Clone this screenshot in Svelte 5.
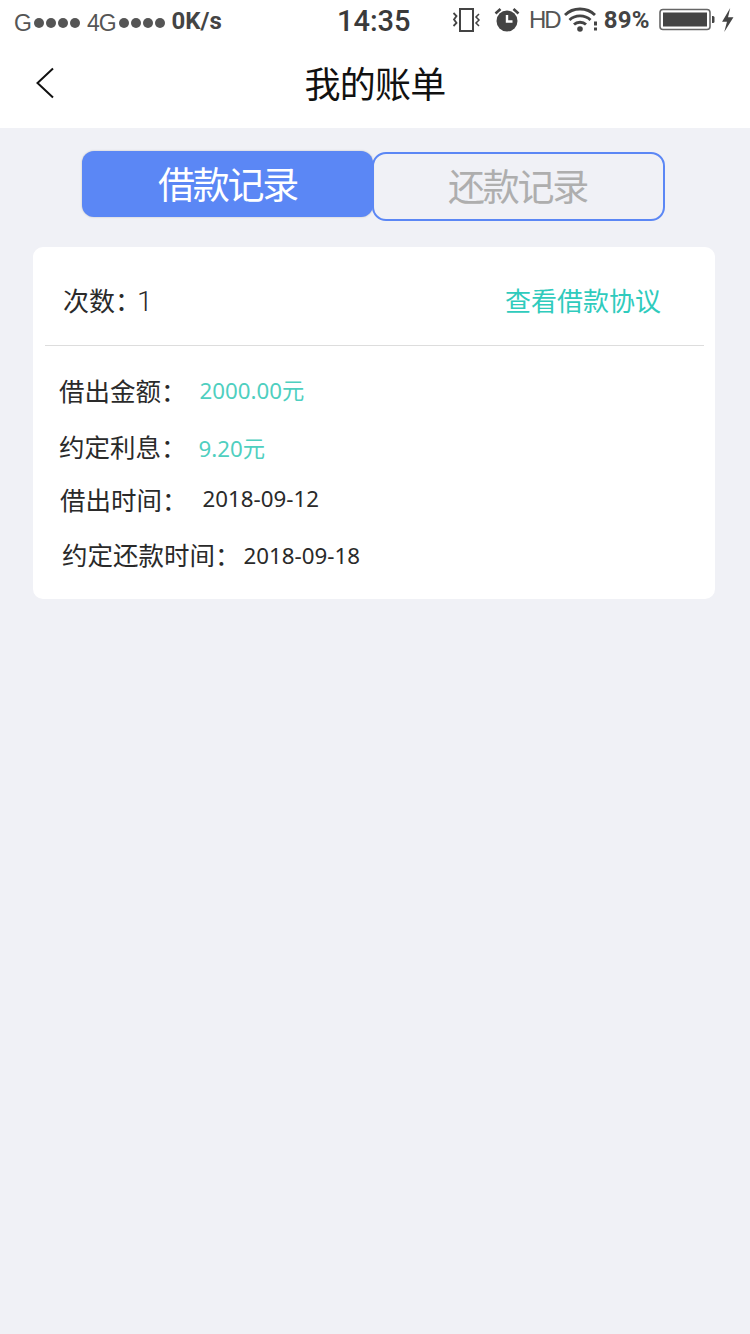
<script>
  const dots = [0, 1, 2, 3];
</script>

<div class="page">
  <header class="top">
    <div class="status">
      <div class="net">
        <span class="sig">G</span>
        <span class="dots">{#each dots as d}<i></i>{/each}</span>
        <span class="sig g4">4G</span>
        <span class="dots">{#each dots as d}<i></i>{/each}</span>
        <b class="speed">0K/s</b>
      </div>
      <div class="clock">14:35</div>
      <div class="sys">
        <svg class="vib" width="30" height="26" viewBox="0 0 30 26" fill="none" stroke="#444" stroke-width="2">
          <rect x="9" y="2" width="13" height="22" />
          <path d="M2.500 6 L5.500 9 L3 12.500 L5.500 16 L2.500 19" stroke-width="1.800" />
          <path d="M28 7 L25 10 L28 13 L25 16 L28 19" stroke-width="1.500" />
        </svg>
        <svg class="alarm" width="26" height="26" viewBox="0 0 26 26">
          <circle cx="13" cy="14" r="10.500" fill="#444" />
          <path d="M13 8 V14.500 H18.500" fill="none" stroke="#fff" stroke-width="2.400" />
          <path d="M1.500 6.500 L6.500 2 M24.500 6.500 L19.500 2" stroke="#444" stroke-width="2.600" />
        </svg>
        <span class="hd">HD</span>
        <svg class="wifi" width="34" height="26" viewBox="0 0 34 26" fill="none" stroke="#444" stroke-width="2.800">
          <path d="M1 8 C9 0 23 0 31 8" />
          <path d="M5.500 13 C11 7.500 21 7.500 26.500 13" />
          <path d="M10 17.500 C13 14.500 19 14.500 22 17.500" />
          <circle cx="16" cy="22" r="2.800" fill="#444" stroke="none" />
          <rect x="30" y="14.500" width="3" height="4" fill="#444" stroke="none" />
          <rect x="30" y="20.500" width="3" height="3" fill="#444" stroke="none" />
        </svg>
        <b class="pct">89%</b>
        <svg class="batt" width="58" height="24" viewBox="0 0 58 24">
          <rect x="1" y="1.500" width="50" height="20" rx="3" fill="none" stroke="#666" stroke-width="1.600" />
          <rect x="4" y="4.500" width="44" height="14" fill="#444" />
          <path d="M53 8 h1 a1.500 1.500 0 0 1 1.500 1.500 v4 a1.500 1.500 0 0 1 -1.500 1.500 h-1 z" fill="#444" />
        </svg>
        <svg class="bolt" width="13" height="26" viewBox="0 0 12 24">
          <path d="M8.500 1 L1 13.500 H5.500 L3 23 L11.500 9.500 H6.500 Z" fill="#444" />
        </svg>
      </div>
    </div>
    <div class="nav">
      <svg class="back" width="20" height="32" viewBox="0 0 20 32" fill="none" stroke="#111" stroke-width="2">
        <path d="M18 1.500 L2.500 16 L18 30.500" />
      </svg>
      <h1>我的账单</h1>
    </div>
  </header>

  <div class="tabs">
    <div class="tab on">借款记录</div>
    <div class="tab off">还款记录</div>
  </div>

  <section class="card">
    <div class="head">
      <div class="count">次数：<span>1</span></div>
      <div class="link">查看借款协议</div>
    </div>
    <div class="rows">
      <div class="row r1"><span class="k">借出金额：</span><span class="v teal">2000.00元</span></div>
      <div class="row r2"><span class="k">约定利息：</span><span class="v teal">9.20元</span></div>
      <div class="row r3"><span class="k">借出时间：</span><span class="v">2018-09-12</span></div>
      <div class="row r4"><span class="k">约定还款时间：</span><span class="v">2018-09-18</span></div>
    </div>
  </section>
</div>

<style>
  :global(body) {
    margin: 0;
    background: #f0f1f6;
    font-family: "Noto Sans CJK SC", "Noto Sans", sans-serif;
  }
  .page {
    min-height: 1334px;
    background: #f0f1f6;
    overflow: hidden;
  }
  .top {
    background: #fff;
    height: 128px;
  }
  .status {
    height: 40px;
    display: flex;
    align-items: center;
    color: #444;
    position: relative;
  }
  .net {
    display: flex;
    align-items: center;
    margin-left: 14px;
    width: 290px;
  }
  .sig {
    font-family: "Liberation Sans", sans-serif;
    font-size: 23px;
    color: #555;
    letter-spacing: -1px;
    position: relative;
    top: 3px;
  }
  .g4 { margin-left: 7px; }
  .dots {
    display: flex;
    gap: 2px;
    margin-left: 3px;
    position: relative;
    top: 3px;
  }
  .dots i {
    width: 10px;
    height: 10px;
    border-radius: 50%;
    background: #555;
  }
  .speed {
    font-family: Roboto, sans-serif;
    font-size: 24px;
    font-weight: 700;
    margin-left: 7px;
    position: relative;
    top: 1px;
  }
  .clock {
    position: absolute;
    left: 337px;
    top: 3px;
    font-family: Roboto, sans-serif;
    font-weight: 500;
    font-size: 29px;
    line-height: 36px;
    color: #3a3a3a;
  }
  .sys {
    position: absolute;
    left: 451px;
    top: 6px;
    display: flex;
    align-items: center;
    height: 28px;
  }
  .alarm { margin-left: 13px; }
  .hd {
    font-family: "Liberation Sans", sans-serif;
    font-size: 24px;
    letter-spacing: -2px;
    margin-left: 9px;
    color: #555;
  }
  .wifi { margin-left: 4px; }
  .pct {
    font-family: Roboto, sans-serif;
    font-size: 24px;
    font-weight: 700;
    margin-left: 6px;
    letter-spacing: 0.3px;
  }
  .batt { margin-left: 9px; }
  .bolt { margin-left: 4px; }
  .nav {
    height: 88px;
    position: relative;
    display: flex;
    align-items: center;
    justify-content: center;
  }
  .back {
    position: absolute;
    left: 35px;
    top: 27px;
  }
  h1 {
    margin: -4px 0 0;
    font-size: 36px;
    font-weight: 400;
    color: #111;
    line-height: 88px;
    letter-spacing: -0.700px;
  }
  .tabs {
    display: flex;
    margin: 23px 0 0 82px;
    height: 70px;
  }
  .tab {
    box-sizing: border-box;
    text-align: center;
  }
  .on {
    width: 291px;
    height: 66px;
    border-radius: 12px;
    background: #5b87f5;
    color: #fff;
    font-size: 37px;
    line-height: 64px;
    letter-spacing: -2.200px;
    box-shadow: 0 0 2px #bbb;
  }
  .off {
    width: 293px;
    height: 69px;
    margin: 1px 0 0 -1px;
    border: 2px solid #5b87f5;
    border-radius: 14px;
    color: #aeaeae;
    font-size: 37px;
    line-height: 62px;
    letter-spacing: -2.200px;
    padding-right: 2px;
  }
  .card {
    box-sizing: border-box;
    margin: 26px 35px 0 33px;
    height: 352px;
    border-radius: 10px;
    background: #fff;
    padding: 0 11px 0 12px;
  }
  .head {
    border-bottom: 1px solid #ddd;
    display: flex;
    justify-content: space-between;
    align-items: center;
    padding: 6px 43px 0 18px;
    height: 92px;
  }
  .count {
    font-size: 26px;
    color: #2a2a2a;
    font-feature-settings: "halt";
  }
  .count span {
    font-family: Roboto, sans-serif;
    font-weight: 300;
    font-size: 28px;
    margin-left: 9px;
  }
  .link {
    font-size: 26px;
    color: #2fcbbd;
  }
  .rows {
    display: flex;
    flex-direction: column;
  }
  .row {
    display: flex;
    align-items: center;
    color: #2a2a2a;
  }
  .k {
    font-size: 25.500px;
  }
  .v {
    font-family: "Noto Sans", "Noto Sans CJK SC", sans-serif;
    font-size: 22.300px;
  }
  .teal { color: #4fcfc0; }
  .r1 { margin: 25px 0 0 14px; height: 36px; }
  .r1 .v { margin-left: 13px; }
  .r2 { margin: 20px 0 0 14px; height: 36px; }
  .r2 .v { margin-left: 12px; position: relative; top: 2px; }
  .r3 { margin: 17px 0 0 15px; height: 36px; }
  .r3 .v { margin-left: 15px; }
  .r4 { margin: 19px 0 0 17px; height: 36px; }
  .r4 .v { margin-left: 3px; position: relative; top: 2px; }
</style>
